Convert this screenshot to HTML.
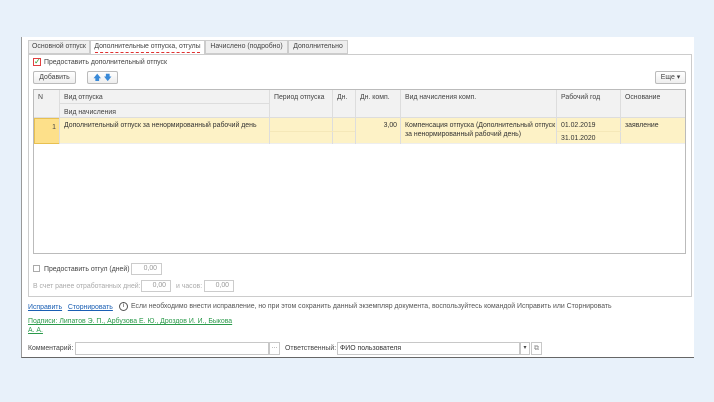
<!DOCTYPE html>
<html><head><meta charset="utf-8"><style>
*{box-sizing:border-box;margin:0;padding:0}
body{width:714px;height:402px;background:#e8f1fa;font-family:"Liberation Sans",sans-serif;font-size:6.9px;color:#444;position:relative;overflow:hidden}
.a{position:absolute;white-space:nowrap}
.panel{left:21px;top:37px;width:673px;height:321px;background:#fff;border-left:1px solid #999;border-bottom:1px solid #666}
.tab{top:40px;height:14px;border:1px solid #ccc;background:#efefef;line-height:12px;text-align:center;color:#444}
.box{border:1px solid #c8c8c8;background:#fff}
.btn{border:1px solid #bbb;border-radius:2px;background:linear-gradient(#fff,#eee);text-align:center;line-height:11px}
.c{position:absolute;border-right:1px solid #ddd;padding:4px 4px;white-space:nowrap}
.d{position:absolute;color:#333;white-space:nowrap}
.inp{border:1px solid #ccc;background:#fff;text-align:right;padding-right:4px;line-height:10px;color:#999}
a{color:#1a5fb4;text-decoration:underline}
</style></head><body>
<div class="a panel"></div>
<div class="a tab" style="left:28px;width:62px">Основной отпуск</div>
<div class="a tab" style="left:90px;background:#fff;border-bottom:none;height:15px;width:115px">Дополнительные отпуска, отгулы<div style="border-bottom:1px dashed #e03030;margin:-1px 4px 0"></div></div>
<div class="a tab" style="left:205px;width:83px">Начислено (подробно)</div>
<div class="a tab" style="left:288px;width:60px">Дополнительно</div>
<div class="a box" style="left:28px;top:54px;width:664px;height:243px;border-color:#ccc"></div>
<div class="a" style="left:33px;top:58px;width:8px;height:8px;border:1px solid #e04040;background:#fff;color:#2a9a2a;font-size:8px;line-height:6px;text-align:center">✓</div>
<div class="a" style="left:44px;top:59px">Предоставить дополнительный отпуск</div>
<div class="a btn" style="left:33px;top:71px;width:43px;height:13px">Добавить</div>
<div class="a btn" style="left:87px;top:71px;width:31px;height:13px;color:#3a8ad8;font-size:8px">🡅 🡇</div>
<div class="a btn" style="left:655px;top:71px;width:31px;height:13px">Еще ▾</div>
<div class="a box" style="left:33px;top:89px;width:653px;height:165px;border-color:#bbb"></div>
<div class="a" style="left:34px;top:90px;width:651px;height:28px;background:#f2f2f2;border-bottom:1px solid #ddd"></div>
<div class="a" style="left:34px;top:118px;width:651px;height:26px;background:#fdf2c6;border-bottom:1px solid #eee"></div>
<div class="a" style="left:34px;top:118px;width:26px;height:26px;background:#fde08a;border:1px solid #e8c050;text-align:right;padding:5px 3px">1</div>
<div class="c" style="left:34px;top:90px;width:26px;height:54px">N</div>
<div class="c" style="left:60px;top:90px;width:210px;height:14px;border-bottom:1px solid #ddd">Вид отпуска</div>
<div class="c" style="left:60px;top:104px;width:210px;height:14px;padding-top:5px">Вид начисления</div>
<div class="c" style="left:60px;top:118px;width:210px;height:26px"></div>
<div class="c" style="left:270px;top:90px;width:63px;height:54px">Период отпуска</div>
<div class="a" style="left:270px;top:131px;width:86px;border-top:1px solid #f5e8b8"></div>
<div class="c" style="left:333px;top:90px;width:23px;height:54px">Дн.</div>
<div class="c" style="left:356px;top:90px;width:45px;height:54px">Дн. комп.</div>
<div class="c" style="left:401px;top:90px;width:156px;height:54px">Вид начисления комп.</div>
<div class="c" style="left:557px;top:90px;width:64px;height:54px">Рабочий год</div>
<div class="a" style="left:557px;top:131px;width:64px;border-top:1px solid #f5e8b8"></div>
<div class="c" style="left:621px;top:90px;width:64px;height:54px;border:none">Основание</div>
<div class="d" style="left:64px;top:122px">Дополнительный отпуск за ненормированный рабочий день</div>
<div class="d" style="left:356px;top:122px;width:41px;text-align:right">3,00</div>
<div class="d" style="left:405px;top:122px;line-height:8.5px">Компенсация отпуска (Дополнительный отпуск<br>за ненормированный рабочий день)</div>
<div class="d" style="left:561px;top:122px">01.02.2019</div>
<div class="d" style="left:561px;top:135px">31.01.2020</div>
<div class="d" style="left:625px;top:122px">заявление</div>
<div class="a" style="left:33px;top:265px;width:7px;height:7px;border:1px solid #aaa"></div>
<div class="a" style="left:44px;top:266px">Предоставить отгул (дней)</div>
<div class="a inp" style="left:131px;top:263px;width:31px;height:12px">0,00</div>
<div class="a" style="left:33px;top:283px;color:#aaa">В счет ранее отработанных дней:</div>
<div class="a inp" style="left:141px;top:280px;width:30px;height:12px">0,00</div>
<div class="a" style="left:176px;top:283px;color:#aaa">и часов:</div>
<div class="a inp" style="left:204px;top:280px;width:30px;height:12px">0,00</div>
<div class="a" style="left:28px;top:304px"><a>Исправить</a>&nbsp;&nbsp; <a>Сторнировать</a></div>
<div class="a" style="left:119px;top:302px;width:9px;height:9px;border:1px solid #555;border-radius:50%;font-size:6px;text-align:center;line-height:7px;color:#333">i</div>
<div class="a" style="left:131px;top:303px;color:#555">Если необходимо внести исправление, но при этом сохранить данный экземпляр документа, воспользуйтесь командой Исправить или Сторнировать</div>
<div class="a" style="left:28px;top:318px;line-height:8.5px;color:#2a9a4a;text-decoration:underline">Подписи: Липатов Э. П., Арбузова Е. Ю., Дроздов И. И., Быкова<br>А. А.</div>
<div class="a" style="left:28px;top:345px">Комментарий:</div>
<div class="a box" style="left:75px;top:342px;width:194px;height:13px"></div>
<div class="a box" style="left:269px;top:342px;width:11px;height:13px;text-align:center;color:#888">...</div>
<div class="a" style="left:285px;top:345px">Ответственный:</div>
<div class="a box" style="left:337px;top:342px;width:183px;height:13px;padding:2px 2px;color:#333">ФИО пользователя</div>
<div class="a box" style="left:520px;top:342px;width:10px;height:13px;text-align:center;font-size:6px;line-height:11px">▾</div>
<div class="a box" style="left:531px;top:342px;width:11px;height:13px;text-align:center;line-height:11px;color:#888">⧉</div>
</body></html>
